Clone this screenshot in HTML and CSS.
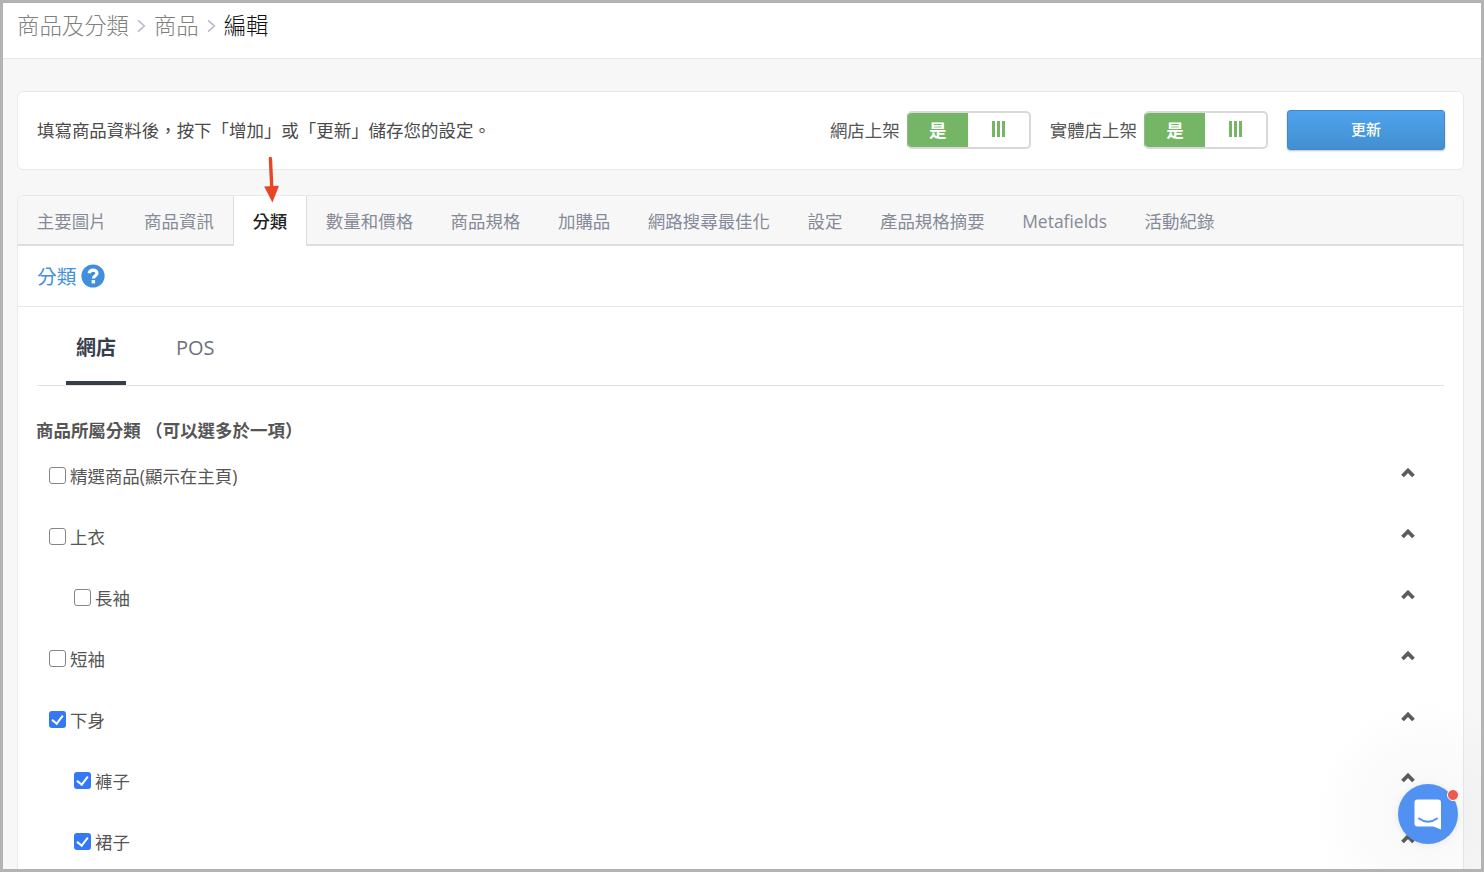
FILE: index.html
```
<!DOCTYPE html>
<html lang="zh-Hant">
<head>
    <meta charset="UTF-8">
    <meta name="viewport" content="width=device-width, initial-scale=1.0">
    <title>編輯商品</title>
    <link rel="stylesheet" href="styles.css">
</head>
<body>
    <header class="breadcrumb">
        <a>商品及分類</a>
        <svg class="sep" viewBox="0 0 8 12"><path d="M1 1l5.5 5L1 11"/></svg>
        <a>商品</a>
        <svg class="sep" viewBox="0 0 8 12"><path d="M1 1l5.5 5L1 11"/></svg>
        <span class="current">編輯</span>
    </header>

    <main>
        <div class="card actions">
            <p class="hint">填寫商品資料後，按下「增加」或「更新」儲存您的設定。</p>
            <span class="switch-label">網店上架</span>
            <div class="switch"><span class="on">是</span><span class="handle"><i></i><i></i><i></i></span></div>
            <span class="switch-label second">實體店上架</span>
            <div class="switch"><span class="on">是</span><span class="handle"><i></i><i></i><i></i></span></div>
            <button class="update">更新</button>
            <svg class="arrow" viewBox="0 0 20 50">
                <path d="M8.4 3.5L9.8 33" stroke="#ea4427" stroke-width="3.4" stroke-linecap="round"/>
                <path d="M2.2 31.5L17 30.7L10.4 47.5z" fill="#ea4427"/>
            </svg>
        </div>

        <div class="card panel">
            <nav class="tabs">
                <a>主要圖片</a>
                <a>商品資訊</a>
                <a class="active">分類</a>
                <a>數量和價格</a>
                <a>商品規格</a>
                <a>加購品</a>
                <a>網路搜尋最佳化</a>
                <a>設定</a>
                <a>產品規格摘要</a>
                <a>Metafields</a>
                <a>活動紀錄</a>
            </nav>
            <div class="panel-title">
                <span>分類</span>
                <svg class="help" viewBox="0 0 24 24">
                    <circle cx="12" cy="12" r="11.6" fill="#3f8fdc"/>
                    <path d="M8.1 9.3C8.5 7.2 10 6.1 12.1 6.1c2.2 0 3.9 1.3 3.9 3.2 0 2.6-3.6 2.8-3.6 5.1" fill="none" stroke="#fff" stroke-width="3.2"/>
                    <rect x="10.6" y="16.1" width="3.5" height="3.3" fill="#fff"/>
                </svg>
            </div>
            <div class="panel-body">
                <nav class="subtabs">
                    <a class="active">網店</a>
                    <a>POS</a>
                </nav>
                <h4>商品所屬分類 （可以選多於一項）</h4>
                <ul class="categories">
                    <li>
                        <label><input type="checkbox"><span>精選商品(顯示在主頁)</span></label>
                        <svg class="chevron" viewBox="0 0 14 10"><path d="M1.5 8L7 2.5L12.5 8"/></svg>
                    </li>
                    <li>
                        <label><input type="checkbox"><span>上衣</span></label>
                        <svg class="chevron" viewBox="0 0 14 10"><path d="M1.5 8L7 2.5L12.5 8"/></svg>
                    </li>
                    <li class="child">
                        <label><input type="checkbox"><span>長袖</span></label>
                        <svg class="chevron" viewBox="0 0 14 10"><path d="M1.5 8L7 2.5L12.5 8"/></svg>
                    </li>
                    <li>
                        <label><input type="checkbox"><span>短袖</span></label>
                        <svg class="chevron" viewBox="0 0 14 10"><path d="M1.5 8L7 2.5L12.5 8"/></svg>
                    </li>
                    <li>
                        <label><input type="checkbox" checked><span>下身</span></label>
                        <svg class="chevron" viewBox="0 0 14 10"><path d="M1.5 8L7 2.5L12.5 8"/></svg>
                    </li>
                    <li class="child">
                        <label><input type="checkbox" checked><span>褲子</span></label>
                        <svg class="chevron" viewBox="0 0 14 10"><path d="M1.5 8L7 2.5L12.5 8"/></svg>
                    </li>
                    <li class="child">
                        <label><input type="checkbox" checked><span>裙子</span></label>
                        <svg class="chevron" viewBox="0 0 14 10"><path d="M1.5 8L7 2.5L12.5 8"/></svg>
                    </li>
                </ul>
            </div>
        </div>
    </main>

    <div class="chat-shade"></div>
    <div class="chat">
        <svg viewBox="0 0 28 31">
            <path d="M3.5 0.5h20.5a3 3 0 0 1 3 3V30.5L19.5 27.5H3.5a3 3 0 0 1-3-3V3.5a3 3 0 0 1 3-3z" fill="#fff"/>
            <path d="M5 19.5q9 6.5 18 0" fill="none" stroke="#5091f2" stroke-width="2" stroke-linecap="round"/>
        </svg>
        <span class="dot"></span>
    </div>
</body>
</html>
```

FILE: styles.css
```
*, ::after {
    box-sizing: border-box;
}
body {
    display: flex;
    flex-direction: column;
    margin: 0;
    height: 872px;
    overflow: hidden;
    position: relative;
    border: 3px solid #b3b3b3;
    background: #f7f7f7;
    font-family: "Open Sans", "Noto Sans CJK TC", sans-serif;
    font-size: 17.47px;
    color: #555;
}
.breadcrumb {
    display: flex;
    flex-shrink: 0;
    align-items: center;
    height: 56px;
    padding: 0 14px 10px;
    background: #fff;
    border-bottom: 1px solid #e6e6e6;
    font-size: 22.4px;
    line-height: 30px;
    font-weight: 300;
    color: #808080;
}
.sep {
    width: 9px;
    height: 14px;
    margin: 0 8px;
    fill: none;
    stroke: #b9bccd;
    stroke-width: 1.5;
}
.current {
    color: #111;
}
main {
    display: flex;
    flex: 1;
    flex-direction: column;
    min-height: 0;
    padding: 32px 17px 0 14px;
}
.card {
    border: 1px solid #e9e9e9;
    border-radius: 6px;
    background: #fff;
}
.actions {
    position: relative;
    display: flex;
    flex-shrink: 0;
    align-items: center;
    height: 79px;
    padding: 0 18px 2px 19px;
    margin-bottom: 25px;
}
.hint {
    margin: 0 auto 0 0;
    color: #4a4a4a;
}
.switch-label {
    margin-right: 7px;
}
.second {
    margin-left: 19px;
}
.switch {
    display: flex;
    width: 124px;
    height: 38px;
    border: 2px solid #d9d9d9;
    border-left: 1px solid #8fbb86;
    border-radius: 5px;
    overflow: hidden;
    background: #fff;
}
.on {
    width: 60px;
    background: #75b566;
    color: #fff;
    font-weight: 700;
    line-height: 34px;
    text-align: center;
}
.handle {
    display: flex;
    flex: 1;
    justify-content: center;
    gap: 2px;
    padding-top: 8px;
}
.handle i {
    width: 3px;
    height: 16px;
    background: #75b566;
}
.update {
    width: 158px;
    height: 40px;
    margin-left: 19px;
    padding: 0 0 2px;
    border: 1px solid #4189cd;
    border-radius: 3px;
    background: linear-gradient(#4fa2ec, #428fd0);
    box-shadow: 0 1px 2px rgba(0, 0, 0, 0.25);
    color: #fff;
    font: 500 15px "Open Sans", "Noto Sans CJK TC", sans-serif;
}
.arrow {
    position: absolute;
    left: 244px;
    top: 63px;
    width: 20px;
    height: 50px;
    z-index: 1;
    fill: none;
}
.panel {
    flex: 1;
    min-height: 0;
    overflow: hidden;
    border-bottom: 0;
    border-radius: 6px 6px 0 0;
}
.tabs {
    display: flex;
    height: 50px;
    border-bottom: 2px solid #dedede;
    background: #f7f7f7;
    color: #868a98;
    line-height: 51px;
}
.tabs a {
    padding: 0 18.75px;
    white-space: nowrap;
}
.tabs .active {
    height: 50px;
    border: 1px solid #dedede;
    border-width: 0 1px;
    background: #fff;
    color: #222;
    font-weight: 500;
}
.panel-title {
    display: flex;
    align-items: center;
    gap: 4px;
    height: 61px;
    padding-left: 19px;
    border-bottom: 1px solid #e6e6e6;
    color: #3f8fdc;
    font-size: 19.8px;
}
.panel-title span {
    margin-top: -2px;
}
.help {
    width: 24px;
    height: 24px;
}
.panel-body {
    padding: 0 19px;
}
.subtabs {
    display: flex;
    gap: 40px;
    height: 79px;
    padding-left: 29px;
    border-bottom: 1px solid #e2e2e2;
    font-size: 20px;
    line-height: 82px;
    color: #6c7080;
}
.subtabs a {
    height: 78px;
    padding: 0 10px;
}
.subtabs .active {
    border-bottom: 4px solid #373d4a;
    color: #373d4a;
    font-weight: 700;
}
h4 {
    margin: 31px 0 17px -1px;
    font-size: 17.47px;
    line-height: 26px;
    font-weight: 700;
    color: #555;
}
.categories {
    list-style: none;
    margin: 0;
    padding: 0 29px 0 12px;
}
.categories li {
    display: flex;
    align-items: flex-start;
    justify-content: space-between;
    height: 61px;
}
.categories .child {
    padding-left: 25px;
}
.categories label {
    display: flex;
    line-height: 32px;
    color: #555;
}
.categories input {
    appearance: none;
    width: 17px;
    height: 17px;
    margin: 7px 4px 0 0;
    border: 1.5px solid #858585;
    border-radius: 3px;
    background: #fff;
}
.categories input:checked {
    position: relative;
    border: 0;
    background: #3478f6;
}
.categories input:checked::after {
    content: "";
    position: absolute;
    left: 5px;
    top: 2px;
    width: 7px;
    height: 11px;
    border: solid #fff;
    border-width: 0 2px 2px 0;
    transform: rotate(38deg);
}
.chevron {
    width: 14px;
    height: 10px;
    margin-top: 8px;
    fill: none;
    stroke: #5c5c5c;
    stroke-width: 3.8;
}
/* chat launcher, bottom right */
.chat-shade {
    position: absolute;
    right: 0;
    bottom: 0;
    width: 170px;
    height: 170px;
    background: radial-gradient(circle at 117px 115px, rgba(29, 39, 54, 0.04), rgba(29, 39, 54, 0) 115px);
}
.chat {
    position: absolute;
    right: 23px;
    bottom: 25px;
    display: flex;
    align-items: center;
    justify-content: center;
    width: 60px;
    height: 60px;
    border-radius: 50%;
    background: #5091f2;
    box-shadow: 0 1px 6px rgba(0, 0, 0, 0.08);
}
.chat svg {
    width: 28px;
    height: 31px;
}
.dot {
    position: absolute;
    right: -1px;
    top: 5px;
    width: 12px;
    height: 12px;
    border: 1px solid #fff;
    border-radius: 50%;
    background: #eb5951;
}
```
